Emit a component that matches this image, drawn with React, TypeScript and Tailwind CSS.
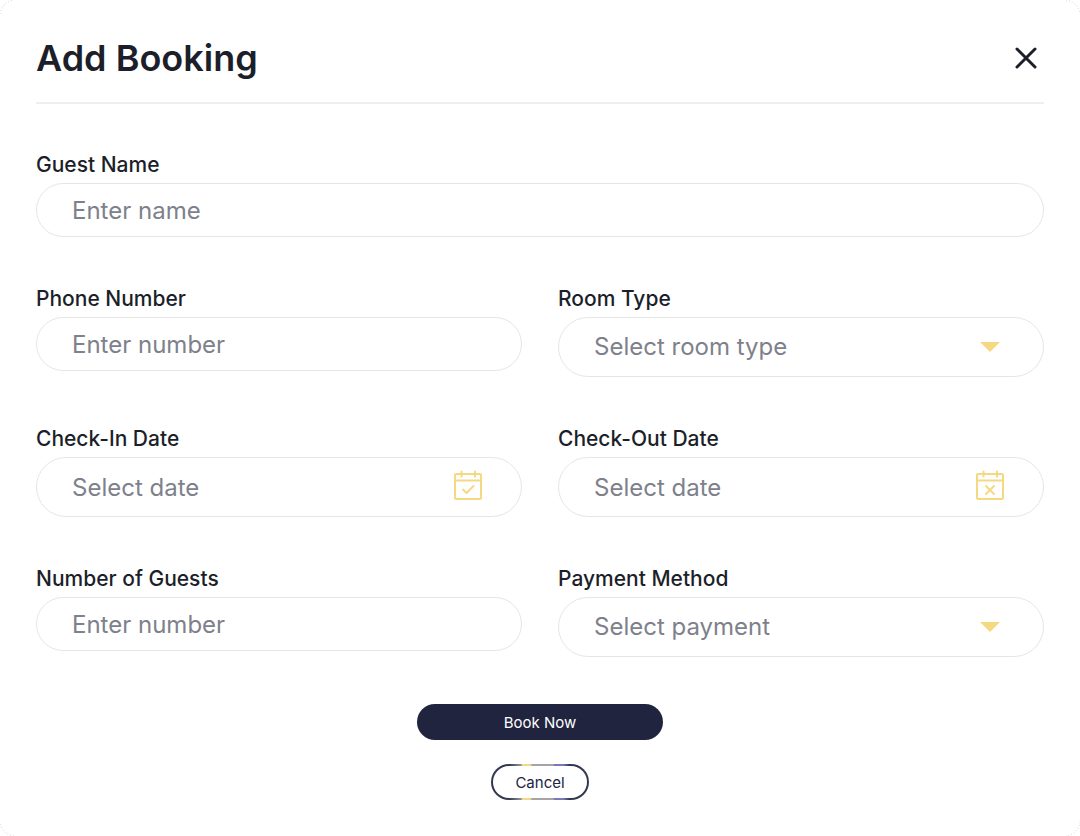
import type { ReactNode } from "react";

const fieldBox =
  "w-full rounded-full border border-[#e6e6e7] bg-white px-[35px] text-2xl text-[#1c1f2a] outline-none placeholder:text-[#7e818b] placeholder:opacity-100 focus:border-[#20243f]";

function Field({
  id,
  label,
  wide,
  children,
}: {
  id: string;
  label: string;
  wide?: boolean;
  children: ReactNode;
}) {
  return (
    <div className={wide ? "space-y-1.5 sm:col-span-2" : "space-y-1.5"}>
      <label htmlFor={id} className="block text-[21px] leading-6 font-medium">
        {label}
      </label>
      {children}
    </div>
  );
}

function TextField({ id, label, placeholder, wide }: { id: string; label: string; placeholder: string; wide?: boolean }) {
  return (
    <Field id={id} label={label} wide={wide}>
      <input id={id} type="text" placeholder={placeholder} className={`${fieldBox} h-[54px]`} />
    </Field>
  );
}

function SelectField({ id, label, placeholder, options }: { id: string; label: string; placeholder: string; options: string[] }) {
  return (
    <Field id={id} label={label}>
      <div className="relative">
        <select id={id} defaultValue="" className={`${fieldBox} block h-[60px] appearance-none invalid:text-[#7e818b]`} required>
          <option value="" disabled>
            {placeholder}
          </option>
          {options.map((option) => (
            <option key={option}>{option}</option>
          ))}
        </select>
        <svg
          viewBox="0 0 20 10"
          className="pointer-events-none absolute top-1/2 right-11 h-2.5 w-5 -translate-y-1/2"
          aria-hidden="true"
        >
          <path d="M0 0H20L10 10Z" fill="#f5d982" />
        </svg>
      </div>
    </Field>
  );
}

function DateField({ id, label, mark }: { id: string; label: string; mark: string }) {
  return (
    <Field id={id} label={label}>
      <div className="relative">
        <input id={id} type="text" placeholder="Select date" className={`${fieldBox} block h-[60px]`} />
        <svg
          viewBox="0 0 28 32"
          className="pointer-events-none absolute top-3 right-10 h-8 w-7"
          fill="none"
          stroke="#f5d982"
          strokeWidth="2"
          strokeLinecap="round"
          strokeLinejoin="round"
          aria-hidden="true"
        >
          <path d="M2 5H26Q27 5 27 6V29Q27 30 26 30H2Q1 30 1 29V6Q1 5 2 5ZM1 11.5H27M7.5 2.5V7.5M21 2.5V7.5" />
          <path d={mark} />
        </svg>
      </div>
    </Field>
  );
}

// faint dotted arc in the corner of the dialog
function Corner({ className }: { className: string }) {
  return (
    <svg viewBox="0 0 16 16" className={`pointer-events-none absolute size-4 ${className}`} fill="none" aria-hidden="true">
      <path d="M0 14Q2 2 14 0" stroke="#d4d4d4" strokeDasharray="1 2" />
    </svg>
  );
}

export default function App() {
  return (
    <main className="relative min-h-screen bg-white px-9 pt-8 pb-9 font-['Inter',sans-serif] text-[#1c1f2a]">
      <Corner className="top-0 left-0" />
      <Corner className="top-0 right-0 rotate-90" />
      <Corner className="right-0 bottom-0 rotate-180" />
      <Corner className="bottom-0 left-0 -rotate-90" />

      <header className="flex items-start justify-between border-b-2 border-[#eeeeef] pb-[18px]">
        <h1 className="text-4xl leading-[52px] font-semibold">Add Booking</h1>
        <button type="button" aria-label="Close" className="mt-2 flex size-9 cursor-pointer items-center justify-center">
          <svg viewBox="0 0 22 22" className="size-[22px]" stroke="#1c1f2a" strokeWidth="3" strokeLinecap="round" aria-hidden="true">
            <path d="M2 2L20 20M20 2L2 20" />
          </svg>
        </button>
      </header>

      <form onSubmit={(event) => event.preventDefault()}>
        <div className="grid gap-x-9 gap-y-[50px] pt-[49px] sm:grid-cols-2">
          <TextField id="guest-name" label="Guest Name" placeholder="Enter name" wide />
          <TextField id="phone" label="Phone Number" placeholder="Enter number" />
          <SelectField
            id="room-type"
            label="Room Type"
            placeholder="Select room type"
            options={["Single", "Double", "Suite"]}
          />
          <DateField id="check-in" label="Check-In Date" mark="M9 20.5L12.5 24L19.5 17" />
          <DateField id="check-out" label="Check-Out Date" mark="M10 17L18 25M18 17L10 25" />
          <TextField id="guests" label="Number of Guests" placeholder="Enter number" />
          <SelectField id="payment" label="Payment Method" placeholder="Select payment" options={["Cash", "Card"]} />
        </div>

        <div className="flex flex-col items-center gap-6 pt-[47px]">
          <button type="submit" className="h-9 w-[246px] cursor-pointer rounded-full bg-[#20243f] pt-0.5 text-[15px] text-white">
            Book Now
          </button>
          <button
            type="button"
            className="h-9 w-[98px] cursor-pointer rounded-full border-2 border-transparent pt-0.5 text-[15px] text-[#20243f] [background:linear-gradient(#fff,#fff)_padding-box,linear-gradient(90deg,#33374f_0_18%,#9a9a9a_31%,#f5d982_32%_40%,#a5a5a8_42%_63%,#7a78bd_65%_74%,#33374f_80%)_border-box]"
          >
            Cancel
          </button>
        </div>
      </form>
    </main>
  );
}
